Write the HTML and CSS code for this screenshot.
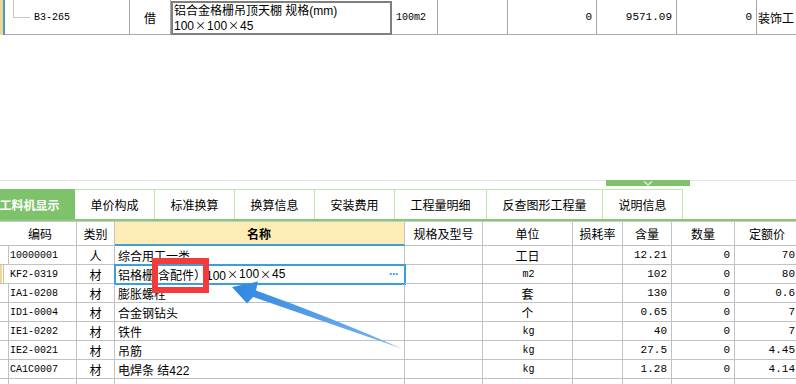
FILE: index.html
```html
<!DOCTYPE html>
<html lang="zh-CN">
  <head>
    <meta charset="UTF-8" />
    <title>工料机显示</title>
    <link rel="stylesheet" href="styles.css">
  </head>
  <body>
    <div class="quota-row">
      <div class="mark"></div>
      <div class="code"><span class="tree"></span><span class="mono">B3-265</span></div>
      <div class="center">借</div>
      <div class="edit-cell">
        <span>铝合金格栅吊顶天棚 规格(mm)</span>
        <span>100<i>×</i>100<i>×</i>45</span>
      </div>
      <div class="mono">100m2</div>
      <div></div>
      <div class="num">0</div>
      <div class="num">9571.09</div>
      <div class="num">0</div>
      <div class="spec">装饰工</div>
    </div>

    <div class="blank"></div>

    <div class="split">
      <div class="handle">
        <svg width="10" height="5" viewBox="0 0 10 5"><polyline points="1,0.5 5,4 9,0.5" fill="none" stroke="#e8f5e2" stroke-width="1.2" /></svg>
      </div>
    </div>

    <div class="tabs">
      <div class="tab active">工料机显示</div>
      <div class="tab">单价构成</div>
      <div class="tab">标准换算</div>
      <div class="tab">换算信息</div>
      <div class="tab">安装费用</div>
      <div class="tab wide">工程量明细</div>
      <div class="tab wider">反查图形工程量</div>
      <div class="tab">说明信息</div>
    </div>

    <div class="grid">
      <div class="head"></div>
      <div class="head">编码</div>
      <div class="head">类别</div>
      <div class="head name-head">名称</div>
      <div class="head">规格及型号</div>
      <div class="head">单位</div>
      <div class="head">损耗率</div>
      <div class="head">含量</div>
      <div class="head">数量</div>
      <div class="head">定额价</div>

      <div></div>
      <div class="mono">10000001</div>
      <div class="center">人</div>
      <div>综合用工一类</div>
      <div></div>
      <div class="center">工日</div>
      <div></div>
      <div class="num">12.21</div>
      <div class="num">0</div>
      <div class="num">70</div>

      <div class="row-mark"></div>
      <div class="mono">KF2-0319</div>
      <div class="center">材</div>
      <div class="selected">铝格栅(含配件）100<i>×</i>100<i>×</i>45<span class="more">···</span></div>
      <div></div>
      <div class="center mono">m2</div>
      <div></div>
      <div class="num">102</div>
      <div class="num">0</div>
      <div class="num">80</div>

      <div></div>
      <div class="mono">IA1-0208</div>
      <div class="center">材</div>
      <div>膨胀螺栓</div>
      <div></div>
      <div class="center">套</div>
      <div></div>
      <div class="num">130</div>
      <div class="num">0</div>
      <div class="num">0.6</div>

      <div></div>
      <div class="mono">ID1-0004</div>
      <div class="center">材</div>
      <div>合金钢钻头</div>
      <div></div>
      <div class="center">个</div>
      <div></div>
      <div class="num">0.65</div>
      <div class="num">0</div>
      <div class="num">7</div>

      <div></div>
      <div class="mono">IE1-0202</div>
      <div class="center">材</div>
      <div>铁件</div>
      <div></div>
      <div class="center mono">kg</div>
      <div></div>
      <div class="num">40</div>
      <div class="num">0</div>
      <div class="num">7</div>

      <div></div>
      <div class="mono">IE2-0021</div>
      <div class="center">材</div>
      <div>吊筋</div>
      <div></div>
      <div class="center mono">kg</div>
      <div></div>
      <div class="num">27.5</div>
      <div class="num">0</div>
      <div class="num">4.45</div>

      <div></div>
      <div class="mono">CA1C0007</div>
      <div class="center">材</div>
      <div>电焊条 结422</div>
      <div></div>
      <div class="center mono">kg</div>
      <div></div>
      <div class="num">1.28</div>
      <div class="num">0</div>
      <div class="num">4.14</div>

      <div></div><div></div><div></div><div></div><div></div>
      <div></div><div></div><div></div><div></div><div></div>
    </div>

    <!-- annotations drawn over the grid -->
    <div class="note-box"></div>
    <svg class="note-arrow" width="796" height="384" viewBox="0 0 796 384">
      <defs>
        <linearGradient id="arrowFill" x1="232" y1="287" x2="403" y2="349" gradientUnits="userSpaceOnUse">
          <stop offset="0" stop-color="#2f87e2" />
          <stop offset="1" stop-color="#7db8ee" />
        </linearGradient>
      </defs>
      <path d="M232,287 L258,281.5 L256,290.5 Q330,317 403,349 Q328,323 253,297 L247,303.5 Z" fill="url(#arrowFill)" />
    </svg>
  </body>
</html>
```

FILE: styles.css
```css
* {
  box-sizing: border-box;
}
body {
  margin: 0;
  width: 796px;
  height: 384px;
  overflow: hidden;
  position: relative;
  background: #fff;
  color: #000;
  font-family: "Liberation Sans", "Noto Sans CJK SC", sans-serif;
  font-size: 12px;
}
i {
  font-style: normal;
  font-family: "Noto Sans CJK SC", sans-serif;
  font-size: 11px;
  margin: 0 1px;
}
.mono {
  font-family: "Liberation Mono", "Noto Sans CJK SC", monospace;
  font-size: 10px;
}
.center {
  justify-content: center;
}
.num {
  justify-content: flex-end;
  font-family: "Liberation Mono", monospace;
  font-size: 11px;
}

/* upper grid row */
.quota-row {
  display: grid;
  grid-template-columns: 5px 125px 41px 221px 46px 70px 89px 80px 80px 39px;
  width: 796px;
  height: 35px;
}
.quota-row > div {
  display: flex;
  align-items: center;
  padding: 0 4px;
  border-right: 1px solid #a9a9a9;
  border-bottom: 1px solid #a9a9a9;
  white-space: nowrap;
  overflow: hidden;
}
.quota-row .mark {
  padding: 0;
  border-right: none;
  border-bottom: none;
  background: linear-gradient(to right, #f3d68e 0 3px, #3d9cd6 3px 5px);
}
.quota-row .code {
  align-items: flex-start;
  padding-left: 8px;
}
.tree {
  width: 17px;
  height: 18px;
  border-left: 1px solid #c6c6c6;
  border-bottom: 1px solid #c6c6c6;
  margin-right: 4px;
}
.quota-row .code .mono {
  align-self: center;
}
.quota-row .edit-cell {
  flex-direction: column;
  align-items: flex-start;
  justify-content: center;
  padding: 0 1px;
  line-height: 14px;
  border: 2px solid #7f7f7f;
  margin-top: 1px;
}
.quota-row .spec {
  padding: 0 0 0 1px;
  border-right: none;
}

.blank {
  height: 145px;
}

/* splitter with drag handle */
.split {
  height: 9px;
  border-top: 1px solid #e2e2e2;
}
.handle {
  width: 84px;
  height: 6px;
  margin-left: 606px;
  margin-top: -1px;
  background: #7ec36b;
  display: flex;
  justify-content: center;
  align-items: flex-end;
}
.handle svg {
  display: block;
}

/* tabs */
.tabs {
  display: flex;
  height: 32px;
  border-bottom: 2px solid #86c975;
}
.tab {
  width: 80px;
  height: 30px;
  display: flex;
  align-items: center;
  justify-content: center;
  border-top: 1px solid #bfe6ad;
  border-right: 1px solid #bfe6ad;
  font-family: "Noto Sans CJK SC", sans-serif;
  font-size: 12px;
}
.tab.active {
  width: 90px;
  margin-left: -15px;
  background: #7ec36b;
  border-color: #7ec36b;
  color: #fff;
  font-weight: bold;
}
.tab.wide {
  width: 92px;
}
.tab.wider {
  width: 116px;
}

/* material grid */
.grid {
  display: grid;
  grid-template-columns: 4px 73px 38px 290px 78px 90px 50px 49px 63px 61px;
  grid-template-rows: 24px;
  grid-auto-rows: 19px;
  width: 796px;
  border-top: 1px solid #cacaca;
}
.grid > div {
  display: flex;
  align-items: center;
  padding: 0 4px;
  border-right: 1px solid #c2c2c2;
  border-bottom: 1px solid #c2c2c2;
  white-space: nowrap;
  overflow: hidden;
}
.grid > div:nth-child(10n) {
  border-right: none;
  padding-right: 1px;
}
.grid .mono {
  padding-left: 6px;
}
.grid .num {
  padding-right: 4px;
}
.grid .head {
  justify-content: center;
  font-family: "Noto Sans CJK SC", sans-serif;
  background: #fff;
}
.grid .name-head {
  background: #feecb6;
  border-bottom: 2px solid #3a9fda;
  font-weight: bold;
}
.grid .row-mark {
  padding: 0;
  background: linear-gradient(to right, #f3d68e 0 2px, #fff 2px);
}
.grid .selected {
  outline: 2px solid #3a9fda;
  outline-offset: -1px;
  padding-left: 3px;
}
.grid > div:nth-child(10n + 4) {
  padding-left: 3px;
}
.more {
  margin-left: auto;
  margin-right: 2px;
  color: #3a9fda;
  font-size: 12px;
  font-weight: bold;
  letter-spacing: -1px;
}

/* annotation overlays */
.note-box {
  position: absolute;
  left: 152px;
  top: 258px;
  width: 57px;
  height: 35px;
  border: 6px solid #f43b3b;
}
.note-arrow {
  position: absolute;
  left: 0;
  top: 0;
  pointer-events: none;
}
```
